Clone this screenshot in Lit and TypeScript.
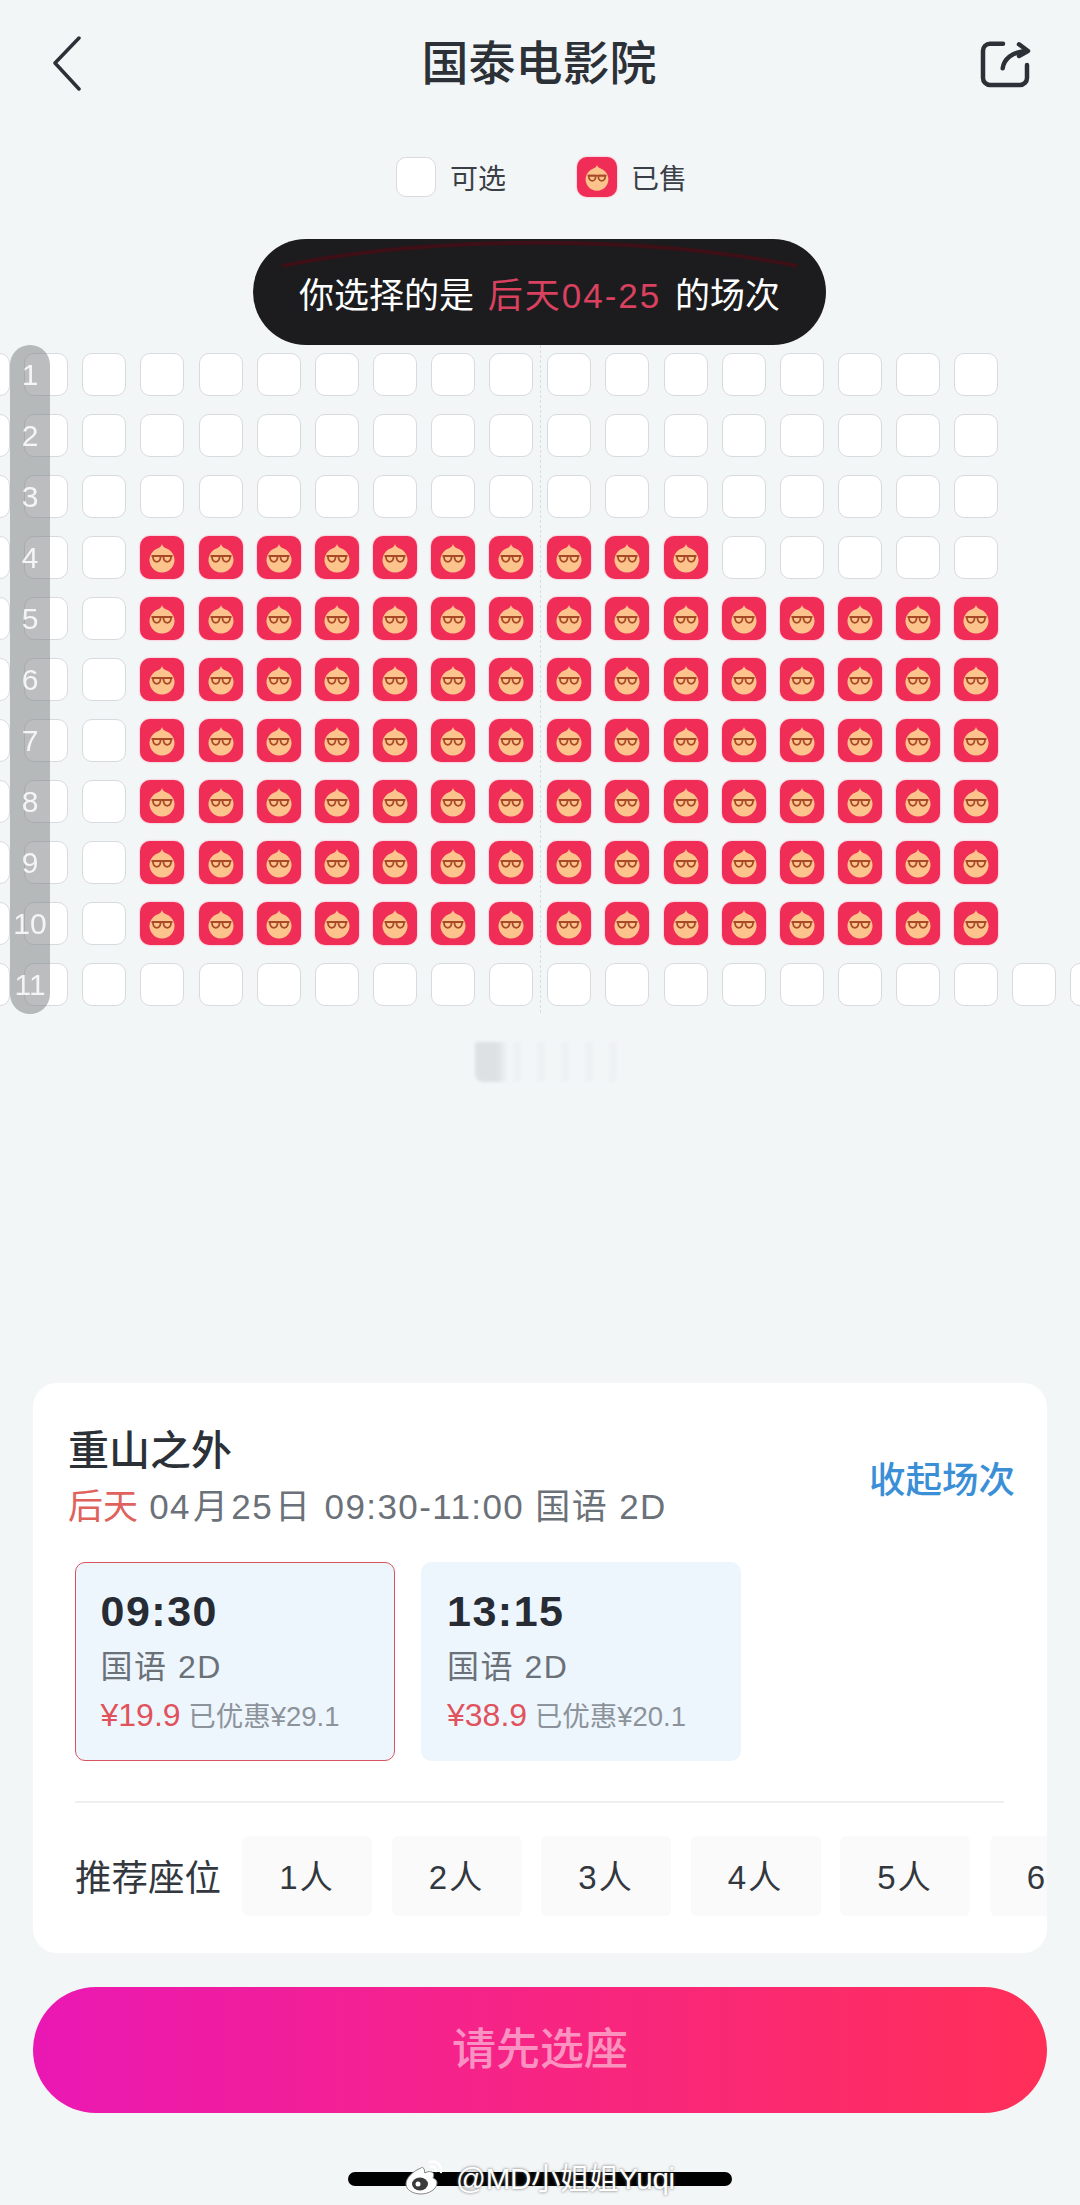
import { LitElement, html, css, svg } from "lit";
import { customElement } from "lit/decorators.js";

const ROW_COLS = 18;
const LAST_ROW_COLS = 20;

// sold range per row, [start, end), in column indexes
const SOLD: Record<number, [number, number]> = {
  4: [3, 13],
  5: [3, 18],
  6: [3, 18],
  7: [3, 18],
  8: [3, 18],
  9: [3, 18],
  10: [3, 18],
};

const face = svg`
  <path d="M22 8c.6 2.3 2 3.600 4.600 4.400A12.500 12.500 0 1 1 17.400 12.400c2.600-.8 4-2.100 4.600-4.400z" fill="#fcc48c" />
  <g fill="none" stroke="#a84a28" stroke-width="1.800" stroke-linejoin="round">
    <path d="M11.500 20h21" />
    <path d="M13 20h7.500c.2 2.800-.6 5.800-3.700 5.800s-4-3-3.800-5.800z" />
    <path d="M23.500 20H31c.2 2.800-.7 5.800-3.800 5.800s-3.900-3-3.700-5.800z" />
  </g>
`;

@customElement("app-root")
export class AppRoot extends LitElement {
  static styles = css`
    :host {
      display: block;
      position: relative;
      width: 1080px;
      height: 2205px;
      overflow: hidden;
      background: #f3f6f7;
      color: #2c3138;
      font-family: "Liberation Sans", "Noto Sans CJK SC", sans-serif;
    }

    .header {
      display: grid;
      grid-template-columns: 1fr auto 1fr;
      align-items: center;
      height: 56px;
      padding: 36px 46px 0 50px;
    }
    .header svg:last-child {
      justify-self: end;
    }
    .title {
      font-size: 47px;
      line-height: 56px;
      font-weight: 500;
      transform: translateX(-3px);
    }

    .legend {
      display: flex;
      justify-content: center;
      gap: 71px;
      margin: 65px 0 0 3px;
      height: 40px;
    }
    .legend-item {
      display: flex;
      align-items: center;
      gap: 14px;
      font-size: 28px;
      color: #3a3f46;
    }
    .legend .seat {
      width: 40px;
      height: 40px;
    }

    .map {
      position: relative;
      height: 670px;
      margin-top: 156px;
    }
    .rows {
      display: flex;
      flex-direction: column;
      gap: 18px;
      margin-left: -34px;
    }
    .row {
      display: flex;
      gap: 14.14px;
    }
    .seat {
      flex: none;
      box-sizing: border-box;
      width: 44px;
      height: 43px;
      background: #fff;
      border: 1.5px solid #d8dbde;
      border-radius: 10px;
    }
    .seat.sold {
      background: #f02d56;
      border: none;
      box-shadow: 0 0 2px #ff8aa6;
      display: block;
    }

    .aisle {
      position: absolute;
      left: 540px;
      top: -8px;
      height: 668px;
      border-left: 1px dashed #dadde0;
    }
    .numbers {
      position: absolute;
      left: 10px;
      top: -8px;
      width: 40px;
      height: 669px;
      display: flex;
      flex-direction: column;
      gap: 18px;
      padding-top: 8px;
      box-sizing: border-box;
      background: rgba(125, 128, 130, 0.52);
      border-radius: 20px;
    }
    .numbers span {
      height: 43px;
      line-height: 43px;
      text-align: center;
      color: #fff;
      font-size: 30px;
      opacity: 0.85;
      flex: none;
    }

    .tip {
      position: absolute;
      left: 253px;
      top: 239px;
      width: 573px;
      height: 106px;
      display: flex;
      align-items: center;
      justify-content: center;
      box-sizing: border-box;
      background: #1c1c1e;
      border-radius: 53px;
      color: #fff;
      font-size: 35px;
      overflow: hidden;
    }
    .tip span {
      white-space: pre;
    }
    .tip em {
      font-style: normal;
      color: #d9415f;
      margin: 0 4px;
      letter-spacing: 2px;
    }
    .tip svg {
      position: absolute;
      left: 0;
      top: 0;
    }

    .mini {
      position: absolute;
      left: 475px;
      top: 1042px;
      width: 146px;
      height: 40px;
      border-radius: 0 0 8px 8px;
      filter: blur(1.5px);
      background:
        linear-gradient(90deg, #dde1e4 0 22px, transparent 34px),
        repeating-linear-gradient(90deg, #f3f6f7 0 12px, #eceff1 18px, #f3f6f7 24px);
    }

    .card {
      position: absolute;
      left: 33px;
      top: 1383px;
      width: 1014px;
      height: 570px;
      box-sizing: border-box;
      padding: 43px 0 0 35px;
      background: #fff;
      border-radius: 24px;
      overflow: hidden;
    }
    .film {
      display: flex;
      justify-content: space-between;
      align-items: center;
      padding-right: 32px;
    }
    .film h1 {
      margin: 0;
      font-size: 41px;
      line-height: 50px;
      font-weight: 500;
    }
    .meta {
      margin-top: 10px;
      font-size: 35px;
      line-height: 42px;
      letter-spacing: 1.4px;
      color: #6b7178;
      white-space: pre;
    }
    .meta em {
      font-style: normal;
      color: #e0625c;
      letter-spacing: 0;
    }
    .meta i {
      font-style: normal;
      margin: 0 2px;
    }
    .fold {
      font-size: 36.5px;
      color: #3a8fd6;
      font-weight: 500;
    }

    .sessions {
      display: flex;
      gap: 26px;
      margin: 34px 0 0 7px;
    }
    .session {
      box-sizing: border-box;
      width: 320px;
      height: 199px;
      padding: 25px 0 0 26px;
      background: #eef6fd;
      border-radius: 10px;
    }
    .session.on {
      border: 1.5px solid #d9535f;
      padding: 23.5px 0 0 24.5px;
    }
    .time {
      font-size: 43px;
      line-height: 48px;
      font-weight: 700;
      letter-spacing: 1.5px;
      color: #262b34;
    }
    .lang {
      margin-top: 12px;
      font-size: 32px;
      line-height: 40px;
      letter-spacing: 1.5px;
      color: #6b7178;
    }
    .price {
      margin-top: 10px;
      font-size: 27.5px;
      line-height: 36px;
      color: #8d939a;
      white-space: pre;
    }
    .price em {
      font-style: normal;
      font-size: 32px;
      color: #e0525c;
    }

    .divider {
      height: 2px;
      margin: 40px 43px 0 7px;
      background: #edeff1;
    }
    .recommend {
      display: flex;
      align-items: center;
      margin: 33px 0 0 7px;
    }
    .recommend-label {
      flex: none;
      width: 167px;
      padding-bottom: 1px;
      font-size: 36.5px;
      color: #33383f;
    }
    .pills {
      display: flex;
      gap: 19.5px;
    }
    .pill {
      flex: none;
      width: 130px;
      height: 80px;
      line-height: 84px;
      text-align: center;
      font-size: 33px;
      letter-spacing: 2px;
      color: #33383f;
      background: #fafafa;
      border-radius: 6px;
    }

    .submit {
      position: absolute;
      left: 33px;
      top: 1987px;
      width: 1014px;
      height: 126px;
      line-height: 126px;
      text-align: center;
      border-radius: 63px;
      font-size: 44px;
      font-weight: 500;
      color: rgba(255, 255, 255, 0.5);
      background: linear-gradient(90deg, #ea18b4, #f5228c 40%, #ff2f58);
    }

    .home {
      position: absolute;
      left: 348px;
      top: 2172px;
      width: 384px;
      height: 14px;
      border-radius: 7px;
      background: #000;
    }
    .mark {
      position: absolute;
      left: 405px;
      top: 2156px;
      display: flex;
      align-items: center;
      gap: 11px;
      height: 40px;
      font-size: 29.5px;
      letter-spacing: -0.3px;
      color: #fff;
      text-shadow: 0 0 3px #666;
      white-space: nowrap;
    }
  `;

  private seat(rowNo: number, col: number) {
    const sold = SOLD[rowNo];
    if (sold && col >= sold[0] && col < sold[1]) {
      return html`<svg class="seat sold" viewBox="0 0 44 43">${face}</svg>`;
    }
    return html`<div class="seat"></div>`;
  }

  private seatRows() {
    const rows = [];
    for (let r = 1; r <= 11; r++) {
      const count = r === 11 ? LAST_ROW_COLS : ROW_COLS;
      rows.push(html`<div class="row">
        ${Array.from({ length: count }, (_, c) => this.seat(r, c))}
      </div>`);
    }
    return rows;
  }

  render() {
    return html`
      <div class="header">
        <svg width="32" height="56" viewBox="0 0 32 56" fill="none" stroke="#2c3138" stroke-width="3.5" stroke-linecap="round" stroke-linejoin="round">
          <path d="M29 2 5 27l24 26" />
        </svg>
        <div class="title">国泰电影院</div>
        <svg width="54" height="48" viewBox="0 0 54 48" fill="none" stroke="#2c3138" stroke-width="4.5" stroke-linecap="round" stroke-linejoin="round">
          <path d="M23 3.700H10a7 7 0 0 0-7 7V38a7 7 0 0 0 7 7h30a7 7 0 0 0 7-7V25" />
          <path d="M22.700 28.300C24 19 32 12 46 11" />
          <path d="M39 4.300 48 11l-9 5" />
        </svg>
      </div>

      <div class="legend">
        <div class="legend-item"><div class="seat"></div>可选</div>
        <div class="legend-item">
          <svg class="seat sold" viewBox="0 0 44 43">${face}</svg>已售
        </div>
      </div>

      <div class="map">
        <div class="rows">${this.seatRows()}</div>
        <div class="aisle"></div>
        <div class="numbers">
          ${Array.from({ length: 11 }, (_, i) => html`<span>${i + 1}</span>`)}
        </div>
      </div>

      <div class="tip">
        <svg width="573" height="106" viewBox="0 0 573 106" fill="none" stroke="#3c1016" stroke-width="4">
          <path d="M29 27C180 -4 390 -4 544 27" />
        </svg>
        <span>你选择的是 <em>后天04-25</em> 的场次</span>
      </div>

      <div class="mini"></div>

      <div class="card">
        <div class="film">
          <div>
            <h1>重山之外</h1>
            <div class="meta"><em>后天</em> 04<i>月</i>25<i>日</i> 09:30-11:00 国语 2D</div>
          </div>
          <div class="fold">收起场次</div>
        </div>
        <div class="sessions">
          <div class="session on">
            <div class="time">09:30</div>
            <div class="lang">国语 2D</div>
            <div class="price"><em>¥19.9</em> 已优惠¥29.1</div>
          </div>
          <div class="session">
            <div class="time">13:15</div>
            <div class="lang">国语 2D</div>
            <div class="price"><em>¥38.9</em> 已优惠¥20.1</div>
          </div>
        </div>
        <div class="divider"></div>
        <div class="recommend">
          <div class="recommend-label">推荐座位</div>
          <div class="pills">
            ${[1, 2, 3, 4, 5, 6].map((n) => html`<div class="pill">${n}人</div>`)}
          </div>
        </div>
      </div>

      <div class="submit">请先选座</div>
      <div class="home"></div>
      <div class="mark">
        <svg width="40" height="38" viewBox="0 0 40 38">
          <path d="M16 11C8 14 1 21 1 27c0 6 7 10 15 10s16-5 16-11c0-3-2-4-4-5 1-3 1-5-1-6-3-1-6 0-7 1-1-1 0-3-1-4-1-2-2-2-3-1z" fill="#fff" stroke="#888" stroke-width="1" />
          <ellipse cx="15" cy="27" rx="8" ry="6.500" fill="#3a3a3a" />
          <circle cx="13" cy="27" r="2.500" fill="#fff" />
          <path d="M25 5c6-2 12 3 11 10M26 10c3-1 5 1 5 4" fill="none" stroke="#fff" stroke-width="2.500" stroke-linecap="round" />
        </svg>
        <span>@MD小姐姐Yuqi</span>
      </div>
    `;
  }
}
